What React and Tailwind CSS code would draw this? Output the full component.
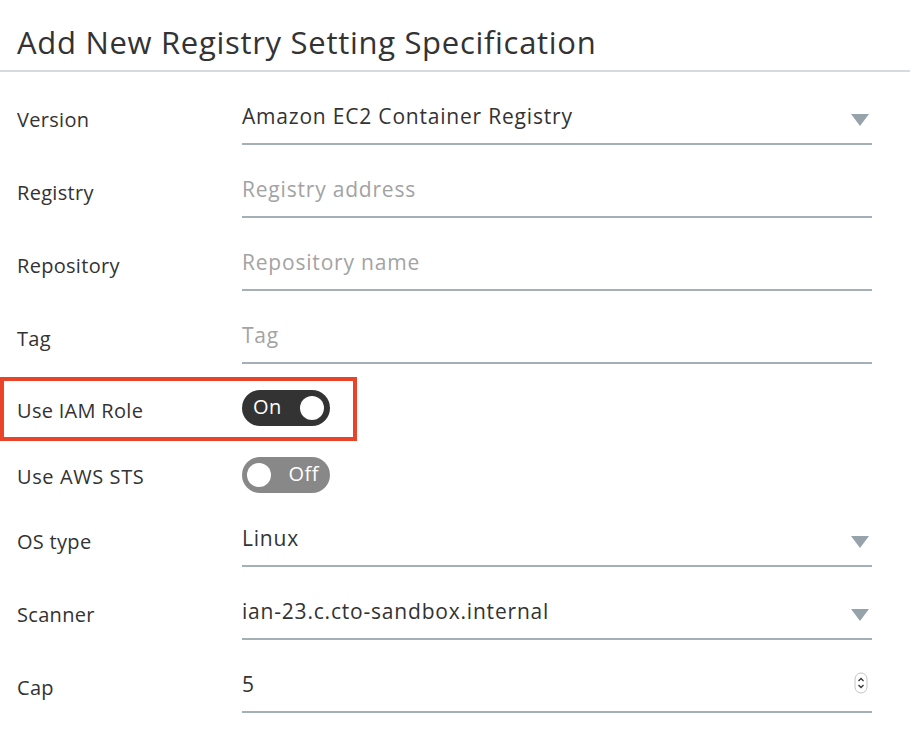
import React from "react";

const font = { fontFamily: "'Open Sans', Lato, sans-serif" };

function Caret() {
  return (
    <svg width="18" height="12" viewBox="0 0 18 12" className="shrink-0">
      <polygon points="0,0 18,0 9,12" fill="#97a3ab" />
    </svg>
  );
}

function Spinner() {
  return (
    <svg width="14" height="22" viewBox="0 0 14 22" className="shrink-0">
      <rect x="1" y="1" width="12" height="20" rx="6" fill="white" stroke="#c4c4c4" strokeWidth="1" />
      <polyline points="4.5,9 7,6.5 9.5,9" fill="none" stroke="#333" strokeWidth="1.3" />
      <polyline points="4.5,13 7,15.5 9.5,13" fill="none" stroke="#333" strokeWidth="1.3" />
    </svg>
  );
}

function FieldRow({ label, value, placeholder, caret, spinner }) {
  return (
    <div className="flex h-[73px] pl-[17px] pr-[38px]">
      <div className="w-[225px] pt-[36px] text-[20px] leading-[24px] tracking-[0.3px] text-[#333]">{label}</div>
      <div className="flex-1 flex items-start pt-[32px] pb-[15px] border-b-2 border-[#a5afb6]">
        <div className={"flex-1 text-[21px] leading-[24px] tracking-[0.8px] " + (value ? "text-[#333]" : "text-[#a3a3a3]")}>
          {value || placeholder}
        </div>
        {caret && (
          <div className="pt-[10px] pr-[3px]">
            <Caret />
          </div>
        )}
        {spinner && (
          <div className="pt-[0px] pr-[4px]">
            <Spinner />
          </div>
        )}
      </div>
    </div>
  );
}

function Toggle({ on }) {
  return on ? (
    <div className="w-[88px] h-[36px] rounded-full bg-[#333333] flex items-center justify-between pl-[11px] pr-[6px]">
      <span className="text-white text-[20px] leading-[24px] tracking-[0.5px] -mt-[2px]">On</span>
      <span className="w-[24px] h-[24px] rounded-full bg-white" />
    </div>
  ) : (
    <div className="w-[88px] h-[36px] rounded-full bg-[#888888] flex items-center justify-between pl-[5px] pr-[11px]">
      <span className="w-[24px] h-[24px] rounded-full bg-white" />
      <span className="text-white text-[20px] leading-[24px] tracking-[0.5px] -mt-[2px]">Off</span>
    </div>
  );
}

export default function App() {
  return (
    <div className="w-[910px] h-[754px] bg-white overflow-hidden" style={font}>
      <div className="h-[72px] border-b-2 border-[#d5dadd] pl-[17px] pt-[23px]">
        <h1 className="text-[31px] leading-[38px] text-[#333] tracking-[0.7px]">
          Add New Registry Setting Specification
        </h1>
      </div>
      <FieldRow label="Version" value="Amazon EC2 Container Registry" caret />
      <FieldRow label="Registry" placeholder="Registry address" />
      <FieldRow label="Repository" placeholder="Repository name" />
      <FieldRow label="Tag" placeholder="Tag" />
      <div className="mt-[13px] w-[357px] h-[64px] border-4 border-[#e9432a] flex items-center pl-[13px]">
        <div className="w-[225px] text-[20px] leading-[24px] tracking-[0.3px] text-[#333] pt-[4px]">Use IAM Role</div>
        <div className="-mt-[3px]">
          <Toggle on />
        </div>
      </div>
      <div className="flex items-center pl-[17px] pt-[16px] pb-[1px]">
        <div className="w-[225px] text-[20px] leading-[24px] tracking-[0.6px] text-[#333] pt-[3px]">Use AWS STS</div>
        <Toggle on={false} />
      </div>
      <FieldRow label="OS type" value="Linux" caret />
      <FieldRow label="Scanner" value="ian-23.c.cto-sandbox.internal" caret />
      <FieldRow label="Cap" value="5" spinner />
    </div>
  );
}
